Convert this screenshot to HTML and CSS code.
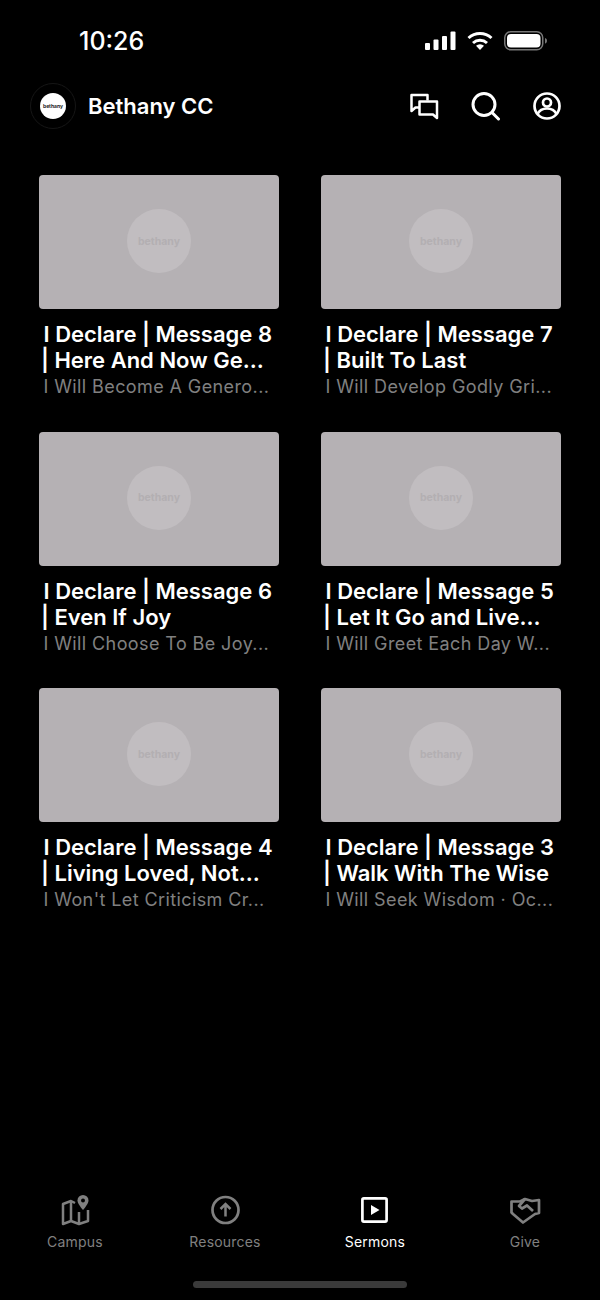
FILE: index.html
```html
<!DOCTYPE html>
<html>
<head>
    <title>Bethany CC</title>
    <link rel="stylesheet" href="styles.css">
</head>
<body>
    <div class="phone">
        <!-- Status bar -->
        <div class="status-bar">
            <span class="time">10:26</span>
            <div class="status-icons">
                <svg width="31" height="20" viewBox="0 0 31 20" fill="#fff"><rect x="0" y="12" width="5" height="7" rx="1"/><rect x="8.500" y="8.500" width="5" height="10.500" rx="1"/><rect x="17" y="5" width="5" height="14" rx="1"/><rect x="25.500" y="0.500" width="5" height="18.500" rx="1"/></svg>
                <svg width="26" height="20" viewBox="0 0 26 20" fill="none" stroke="#fff" stroke-width="3"><path d="M1.500 7a17 17 0 0 1 23 0"/><path d="M6 12a10.500 10.500 0 0 1 14 0"/><path d="M13 19l-4-4.200a6 6 0 0 1 8 0z" fill="#fff" stroke="none"/></svg>
                <svg width="43" height="20" viewBox="0 0 43 20"><rect x="0.750" y="0.750" width="38" height="18" rx="6" fill="none" stroke="#777" stroke-width="1.500"/><rect x="3" y="3" width="33.500" height="13.500" rx="4" fill="#fff"/><path d="M41 7c1.300.4 2 1.500 2 2.800s-.7 2.400-2 2.800z" fill="#777"/></svg>
            </div>
        </div>

        <!-- Top bar -->
        <header class="top-bar">
            <div class="brand">
                <div class="logo"><div class="logo-dot">bethany</div></div>
                <span class="brand-name">Bethany CC</span>
            </div>
            <div class="actions">
                <svg width="30" height="30" viewBox="0 0 30 30" fill="none" stroke="#fff" stroke-width="2.500" stroke-linejoin="round"><path d="M17.500 9.500V4H1.500v16l4-3.500h3.500"/><path d="M9.500 10.500h17.500v16.500l-4-3.500H9.500z"/></svg>
                <svg width="30" height="30" viewBox="0 0 30 30" fill="none" stroke="#fff" stroke-width="3" stroke-linecap="round"><circle cx="13" cy="13.500" r="11"/><path d="M21.500 22l6 6"/></svg>
                <svg width="30" height="30" viewBox="0 0 30 30" fill="none" stroke="#fff" stroke-width="2.700"><circle cx="15" cy="15" r="12.500"/><circle cx="15" cy="11.500" r="4"/><path d="M5.500 23c2-4 5.500-5.500 9.500-5.500s7.500 1.500 9.500 5.500"/></svg>
            </div>
        </header>

        <!-- Sermon grid -->
        <main class="grid">
            <div class="card">
                <div class="thumb"><div class="thumb-dot">bethany</div></div>
                <div class="card-title">I Declare | Message 8</div>
                <div class="card-title second">| Here And Now Ge...</div>
                <div class="card-sub">I Will Become A Genero...</div>
            </div>
            <div class="card">
                <div class="thumb"><div class="thumb-dot">bethany</div></div>
                <div class="card-title">I Declare | Message 7</div>
                <div class="card-title second">| Built To Last</div>
                <div class="card-sub">I Will Develop Godly Gri...</div>
            </div>
            <div class="card">
                <div class="thumb"><div class="thumb-dot">bethany</div></div>
                <div class="card-title">I Declare | Message 6</div>
                <div class="card-title second">| Even If Joy</div>
                <div class="card-sub">I Will Choose To Be Joy...</div>
            </div>
            <div class="card">
                <div class="thumb"><div class="thumb-dot">bethany</div></div>
                <div class="card-title">I Declare | Message 5</div>
                <div class="card-title second">| Let It Go and Live...</div>
                <div class="card-sub">I Will Greet Each Day W...</div>
            </div>
            <div class="card">
                <div class="thumb"><div class="thumb-dot">bethany</div></div>
                <div class="card-title">I Declare | Message 4</div>
                <div class="card-title second">| Living Loved, Not...</div>
                <div class="card-sub">I Won't Let Criticism Cr...</div>
            </div>
            <div class="card">
                <div class="thumb"><div class="thumb-dot">bethany</div></div>
                <div class="card-title">I Declare | Message 3</div>
                <div class="card-title second">| Walk With The Wise</div>
                <div class="card-sub">I Will Seek Wisdom · Oc...</div>
            </div>
        </main>

        <!-- Tab bar -->
        <nav class="tabs">
            <div class="tab">
                <svg width="32" height="32" viewBox="0 0 32 32" fill="none" stroke="#808080" stroke-width="2.500" stroke-linejoin="round"><path d="M16 9l-4-2-8 3v20l8-3 8 3 9-3V16"/><path d="M12 7v20M20 18v12"/><path d="M24 1a5.500 5.500 0 0 1 5.500 5.500c0 3.500-5.500 9.500-5.500 9.500s-5.500-6-5.500-9.500A5.500 5.500 0 0 1 24 1z" fill="#808080" stroke="none"/><circle cx="24" cy="6.500" r="2" fill="#000" stroke="none"/></svg>
                <span>Campus</span>
            </div>
            <div class="tab">
                <svg width="32" height="32" viewBox="0 0 32 32" fill="none" stroke="#808080" stroke-width="2.700"><circle cx="16.500" cy="16" r="13"/><path d="M16.500 22.500V10.500M11.500 15l5-5 5 5" stroke-width="2.500"/></svg>
                <span>Resources</span>
            </div>
            <div class="tab active">
                <svg width="32" height="32" viewBox="0 0 32 32" fill="none" stroke="#fff" stroke-width="2.700" stroke-linejoin="round"><rect x="3.400" y="4.400" width="24.200" height="23.200" rx="1.500"/><path d="M12 11l8.500 5-8.500 5z" fill="#fff" stroke="none"/></svg>
                <span>Sermons</span>
            </div>
            <div class="tab">
                <svg width="32" height="32" viewBox="0 0 32 32" fill="none" stroke="#808080" stroke-width="2.700" stroke-linejoin="round"><path d="M2.500 7.500h8.500l5-2.500 7 2 7-1v13l-4 1-12 8.500-10-8.500-1.500-1.500z"/><path d="M16 5l-6 7 3 2.500 5-3 6 5.500"/></svg>
                <span>Give</span>
            </div>
        </nav>
        <div class="home-bar"></div>
    </div>
</body>
</html>
```
FILE: styles.css
```css
* {
    box-sizing: border-box;
}

body {
    margin: 0;
    background-color: #000;
    color: #fff;
    font-family: Inter, "Liberation Sans", sans-serif;
}

.phone {
    width: 600px;
    height: 1300px;
    display: flex;
    flex-direction: column;
    overflow: hidden;
}

.status-bar {
    height: 82px;
    padding: 26px 53px 0 79px;
    display: flex;
    justify-content: space-between;
    align-items: flex-start;
}

.time {
    font-size: 25px;
    line-height: 30px;
    font-weight: 500;
}

.status-icons {
    display: flex;
    align-items: center;
    gap: 11px;
    padding-top: 5px;
}

.top-bar {
    height: 48px;
    padding: 0 38px 0 30px;
    display: flex;
    justify-content: space-between;
    align-items: center;
}

.brand {
    display: flex;
    align-items: center;
    gap: 12px;
}

.logo {
    width: 46px;
    height: 46px;
    border-radius: 50%;
    border: 1px solid #161616;
    display: flex;
    align-items: center;
    justify-content: center;
}

.logo-dot {
    width: 26px;
    height: 26px;
    border-radius: 50%;
    background-color: #fff;
    color: #222;
    font-size: 5px;
    font-weight: 700;
    display: flex;
    align-items: center;
    justify-content: center;
}

.brand-name {
    font-size: 22px;
    font-weight: 600;
}

.actions {
    display: flex;
    align-items: center;
    gap: 31px;
}

.grid {
    margin-top: 45px;
    padding: 0 39px;
    display: grid;
    grid-template-columns: 240px 240px;
    column-gap: 42px;
    row-gap: 32.500px;
}

.thumb {
    height: 134px;
    margin-bottom: 12px;
    background-color: #b5b1b4;
    border-radius: 4px;
    display: flex;
    align-items: center;
    justify-content: center;
}

.thumb-dot {
    width: 64px;
    height: 64px;
    margin-bottom: 2px;
    border-radius: 50%;
    background-color: #c1bdc0;
    color: #b3afb2;
    font-size: 10.500px;
    font-weight: 700;
    display: flex;
    align-items: center;
    justify-content: center;
}

.card-title {
    padding-left: 4.500px;
    font-size: 22px;
    line-height: 26px;
    font-weight: 600;
    white-space: nowrap;
}

.card-title.second {
    margin-left: -2.500px;
}

.card-sub {
    margin-top: 2px;
    padding-left: 4.500px;
    font-size: 18px;
    line-height: 24px;
    letter-spacing: 0.4px;
    color: #808080;
    white-space: nowrap;
}

.tabs {
    margin-top: auto;
    height: 87px;
    display: grid;
    grid-template-columns: repeat(4, 150px);
}

.tab {
    display: flex;
    flex-direction: column;
    align-items: center;
    gap: 7px;
    color: #808080;
    font-size: 14px;
    line-height: 18px;
    letter-spacing: 0.2px;
}

.tab.active {
    color: #fff;
}

.home-bar {
    width: 214px;
    height: 7px;
    margin: 0 auto 12px;
    border-radius: 4px;
    background-color: #3a3a3a;
}
```
